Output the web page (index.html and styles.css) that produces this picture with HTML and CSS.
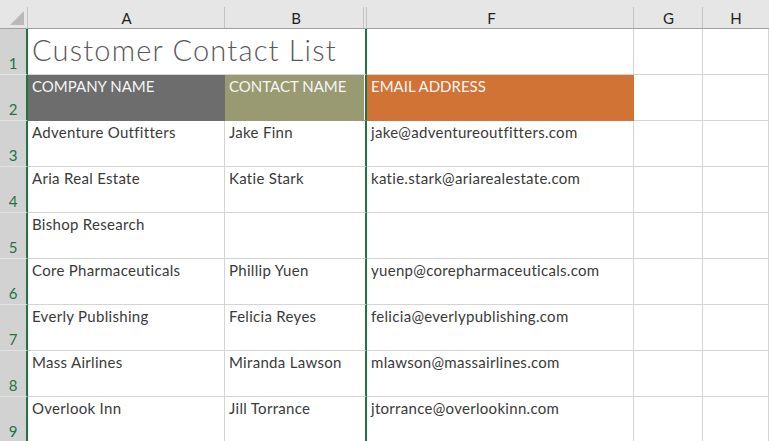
FILE: index.html
```html
<!DOCTYPE html>
<html>
<head>
<meta charset="utf-8">
<link rel="stylesheet" href="styles.css">
</head>
<body>
<div class="sheet">
  <div class="corner"><span class="tri"></span></div>
  <div class="ch">A</div>
  <div class="ch ch-b">B</div>
  <div class="ch ch-f">F</div>
  <div class="ch">G</div>
  <div class="ch">H</div>

  <div class="rh">1</div>
  <div class="c title gb">Customer Contact List</div>
  <div class="c"></div>
  <div class="c"></div>
  <div class="c"></div>

  <div class="rh">2</div>
  <div class="c hd hd-a">COMPANY NAME</div>
  <div class="c hd hd-b gb">CONTACT NAME</div>
  <div class="c hd hd-f">EMAIL ADDRESS</div>
  <div class="c"></div>
  <div class="c"></div>

  <div class="rh">3</div>
  <div class="c">Adventure Outfitters</div>
  <div class="c gb">Jake Finn</div>
  <div class="c">jake@adventureoutfitters.com</div>
  <div class="c"></div>
  <div class="c"></div>

  <div class="rh">4</div>
  <div class="c">Aria Real Estate</div>
  <div class="c gb">Katie Stark</div>
  <div class="c">katie.stark@ariarealestate.com</div>
  <div class="c"></div>
  <div class="c"></div>

  <div class="rh">5</div>
  <div class="c">Bishop Research</div>
  <div class="c gb"></div>
  <div class="c"></div>
  <div class="c"></div>
  <div class="c"></div>

  <div class="rh">6</div>
  <div class="c">Core Pharmaceuticals</div>
  <div class="c gb">Phillip Yuen</div>
  <div class="c">yuenp@corepharmaceuticals.com</div>
  <div class="c"></div>
  <div class="c"></div>

  <div class="rh">7</div>
  <div class="c">Everly Publishing</div>
  <div class="c gb">Felicia Reyes</div>
  <div class="c">felicia@everlypublishing.com</div>
  <div class="c"></div>
  <div class="c"></div>

  <div class="rh">8</div>
  <div class="c">Mass Airlines</div>
  <div class="c gb">Miranda Lawson</div>
  <div class="c">mlawson@massairlines.com</div>
  <div class="c"></div>
  <div class="c"></div>

  <div class="rh">9</div>
  <div class="c">Overlook Inn</div>
  <div class="c gb">Jill Torrance</div>
  <div class="c">jtorrance@overlookinn.com</div>
  <div class="c"></div>
  <div class="c"></div>
</div>
</body>
</html>
```

FILE: styles.css
```css
html, body {
  margin: 0;
  padding: 0;
  background: #ffffff;
  overflow: hidden;
}

.sheet {
  display: grid;
  grid-template-columns: 28px 197px 142px 267px 69px 66px;
  grid-template-rows: 29px repeat(9, 46px);
  width: 769px;
  font-family: Lato, "Open Sans", sans-serif;
  font-size: 15px;
}

.corner {
  background: #e6e6e6;
  border-bottom: 1px solid #a0a0a0;
  box-sizing: border-box;
  position: relative;
}

.tri {
  position: absolute;
  left: 10px;
  top: 11px;
  width: 0;
  height: 0;
  border-style: solid;
  border-width: 0 0 14px 14px;
  border-color: transparent transparent #b9b9b9 transparent;
}

.ch {
  background: #e6e6e6;
  border-bottom: 1px solid #a0a0a0;
  box-sizing: border-box;
  position: relative;
  display: flex;
  align-items: center;
  justify-content: center;
  color: #1f1f1f;
  font-size: 15px;
  padding-top: 7px;
  padding-bottom: 0;
  line-height: 18px;
}

.ch::before {
  content: "";
  position: absolute;
  left: -1px;
  top: 7px;
  bottom: 0;
  width: 1px;
  background: #c3c3c3;
}

.ch-b::after {
  content: "";
  position: absolute;
  right: 0;
  top: 7px;
  bottom: 0;
  width: 4px;
  border-left: 1px solid #c3c3c3;
  border-right: 1px solid #c3c3c3;
  box-sizing: border-box;
}

.ch-f {
  padding-right: 18px;
}

.rh {
  background: #d2d2d2;
  border-right: 2px solid #217346;
  border-bottom: 1px solid #e3e3e3;
  box-sizing: border-box;
  display: flex;
  align-items: flex-end;
  justify-content: center;
  color: #217346;
  font-size: 15px;
  line-height: 18px;
  padding-bottom: 2px;
}

.c {
  border-right: 1px solid #d4d4d4;
  border-bottom: 1px solid #d4d4d4;
  box-sizing: border-box;
  padding: 2px 3px 0 4px;
  color: #3a3a3a;
  line-height: 18px;
  letter-spacing: 0.3px;
  white-space: nowrap;
  overflow: hidden;
}

.gb {
  border-right: 2px solid #217346;
}

.title {
  grid-column: span 2;
  font-size: 29px;
  font-weight: 300;
  color: #595959;
  line-height: 34px;
  letter-spacing: 1.2px;
  padding-top: 4px;
  padding-left: 4px;
}

.hd {
  color: #f6f6f6;
  letter-spacing: 0;
}

.hd-a {
  background: #6d6d6d;
  border-right-color: #6d6d6d;
  border-bottom-color: #6d6d6d;
}

.hd-b {
  background: #9a9a72;
  border-bottom-color: #9a9a72;
  box-shadow: inset -1px 0 0 #ffffff;
}

.hd-f {
  background: #d07334;
  border-right-color: #d07334;
  border-bottom-color: #d07334;
}
```
